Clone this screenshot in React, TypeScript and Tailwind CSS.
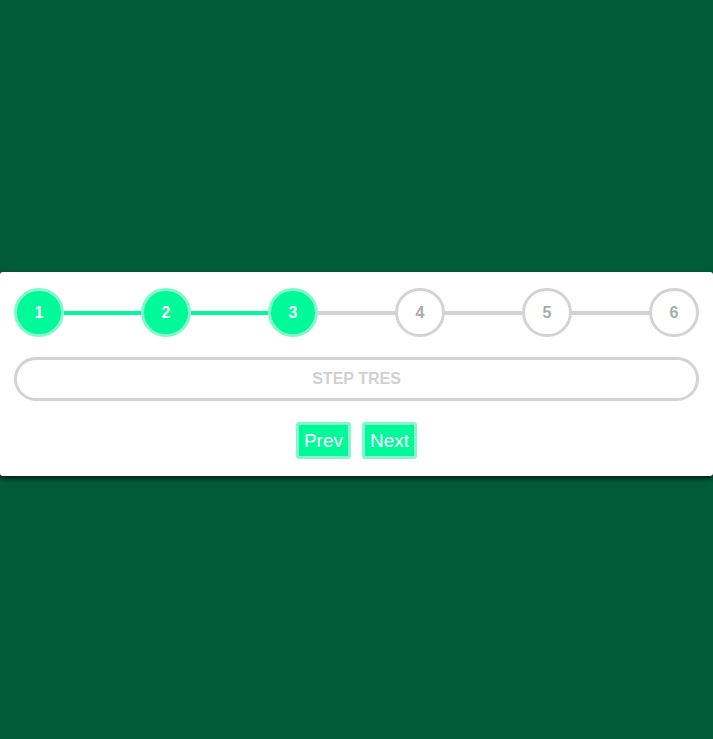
import React, { useState } from 'react';

const labels = ['Uno', 'Dos', 'Tres', 'Cuatro', 'Cinco', 'Seis'];

export default function App() {
    const [step, setStep] = useState(3);

    return (
        <div className="min-h-screen bg-[#005b3b] pt-[272px] font-['Liberation_Sans',Arial,sans-serif]">
            <div className="bg-white rounded-[3px] shadow-[0_3px_4px_rgba(0,0,0,0.6)] px-[14px] pt-[16px] pb-[17px]">
                <div className="flex items-center">
                    {labels.map((_, i) => {
                        const n = i + 1;
                        const done = n <= step;
                        return (
                            <React.Fragment key={n}>
                                {i > 0 && (
                                    <div className={`flex-1 h-[4px] ${n <= step ? 'bg-[#00fa9a]' : 'bg-[#d3d3d3]'}`} />
                                )}
                                <div
                                    className={`w-[50px] h-[49px] shrink-0 rounded-full border-[3px] flex items-center justify-center text-[16px] font-bold ${
                                        done
                                            ? 'bg-[#00fa9a] border-[#84f7cb] text-white'
                                            : 'bg-white border-[#d3d3d3] text-[#aaaaaa]'
                                    }`}
                                >
                                    {n}
                                </div>
                            </React.Fragment>
                        );
                    })}
                </div>

                <div className="mt-[20px] h-[44px] rounded-full border-[3px] border-[#d3d3d3] flex items-center justify-center text-[16px] font-bold text-[#d0d0d0] uppercase">
                    Step {labels[step - 1]}
                </div>

                <div className="mt-[21px] flex justify-center gap-[11px]">
                    <button
                        onClick={() => setStep(Math.max(1, step - 1))}
                        className="h-[37px] px-[5px] rounded-[3px] border-[3px] border-[#84f7cb] bg-[#00fa9a] text-white text-[19px] leading-none"
                    >
                        Prev
                    </button>
                    <button
                        onClick={() => setStep(Math.min(6, step + 1))}
                        className="h-[37px] px-[5px] rounded-[3px] border-[3px] border-[#84f7cb] bg-[#00fa9a] text-white text-[19px] leading-none"
                    >
                        Next
                    </button>
                </div>
            </div>
        </div>
    );
}
